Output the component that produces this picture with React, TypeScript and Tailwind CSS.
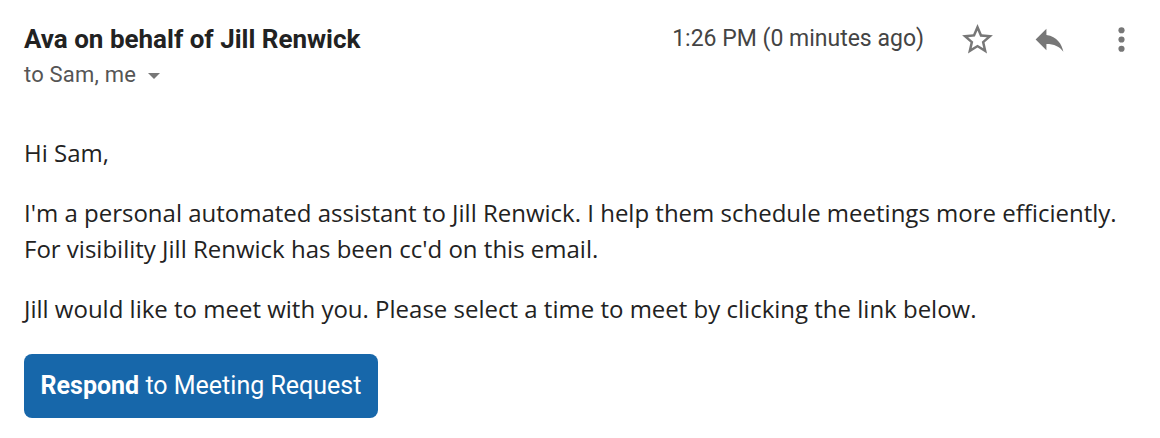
import React from 'react';

const StarIcon = () => (
  <svg viewBox="0 0 24 24" className="w-[37px] h-[37px]" fill="#777">
    <path d="M22 9.24l-7.19-.62L12 2 9.19 8.63 2 9.24l5.46 4.73L5.82 21 12 17.27 18.18 21l-1.63-7.03L22 9.24zM12 15.4l-3.76 2.27 1-4.28-3.32-2.88 4.38-.38L12 6.1l1.71 4.04 4.38.38-3.32 2.88 1 4.28L12 15.4z" />
  </svg>
);

const ReplyIcon = () => (
  <svg viewBox="0 0 24 24" className="w-[37px] h-[37px]" fill="#777">
    <path d="M10 9V5l-7 7 7 7v-4.1c5 0 8.5 1.6 11 5.1-1-5-4-10-11-11z" />
  </svg>
);

const MoreIcon = () => (
  <svg viewBox="0 0 24 24" className="w-[37px] h-[37px]" fill="#777">
    <circle cx="12" cy="6" r="2" />
    <circle cx="12" cy="12" r="2" />
    <circle cx="12" cy="18" r="2" />
  </svg>
);

const App: React.FC = () => {
  return (
    <div className="w-[1160px] h-[438px] bg-white pl-6 pr-5 pt-6 overflow-hidden">
      <div className="flex justify-between items-start font-['Roboto',sans-serif]">
        <div>
          <h2 className="text-[26px] leading-[30px] font-bold text-[#222]">
            Ava on behalf of Jill Renwick
          </h2>
          <div className="mt-2 flex items-center text-[22px] leading-[26px] text-[#555] tracking-[0.2px]">
            to Sam, me
            <span className="ml-[12px] mt-[2px] w-0 h-0 border-l-[6px] border-r-[6px] border-t-[6px] border-l-transparent border-r-transparent border-t-[#777]" />
          </div>
        </div>
        <div className="flex items-center h-[30px] gap-[35px]">
          <span className="text-[23px] text-[#444]">1:26 PM (0 minutes ago)</span>
          <StarIcon />
          <ReplyIcon />
          <MoreIcon />
        </div>
      </div>

      <div className="mt-[47px] font-['Open_Sans',sans-serif] text-[24px] leading-9 text-[#222] flex flex-col gap-6">
        <p>Hi Sam,</p>
        <p>
          I'm a personal automated assistant to Jill Renwick. I help them schedule meetings more efficiently.
          <br />
          For visibility Jill Renwick has been cc'd on this email.
        </p>
        <p>Jill would like to meet with you. Please select a time to meet by clicking the link below.</p>
        <div className="pt-[3px]">
          <button className="h-16 w-[354px] rounded-lg bg-[#1767aa] text-white font-['Roboto',sans-serif] text-[25px]">
            <span className="font-bold">Respond</span> to Meeting Request
          </button>
        </div>
      </div>
    </div>
  );
};

export default App;
